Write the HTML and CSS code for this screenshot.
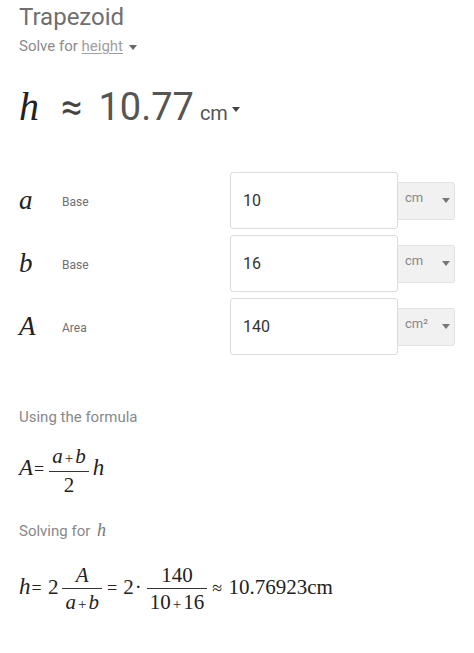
FILE: index.html
```html
<!DOCTYPE html>
<html lang="en">
<head>
    <meta charset="UTF-8" />
    <title>Trapezoid</title>
    <link rel="stylesheet" href="styles.css">
</head>
<body>
    <div class="page">
        <h1 class="title">Trapezoid</h1>
        <div class="solve-for">Solve for <span class="solve-link">height</span><span class="caret"></span></div>

        <div class="result">
            <span class="var result-var">h</span>
            <span class="approx">≈</span>
            <span class="result-value">10.77</span>
            <span class="result-unit">cm</span><span class="caret caret-dark"></span>
        </div>

        <div class="fields">
            <div class="field-row">
                <span class="var field-var">a</span>
                <span class="field-label">Base</span>
                <div class="field-input">10</div>
                <div class="unit-select"><span>cm</span><span class="caret"></span></div>
            </div>
            <div class="field-row">
                <span class="var field-var">b</span>
                <span class="field-label">Base</span>
                <div class="field-input">16</div>
                <div class="unit-select"><span>cm</span><span class="caret"></span></div>
            </div>
            <div class="field-row">
                <span class="var field-var">A</span>
                <span class="field-label">Area</span>
                <div class="field-input">140</div>
                <div class="unit-select"><span>cm²</span><span class="caret"></span></div>
            </div>
        </div>

        <p class="section-label">Using the formula</p>
        <div class="math formula"><span class="var">A</span><span class="op">=</span><span class="frac"><span class="num"><span class="var">a</span><span class="plus">+</span><span class="var">b</span></span><span class="den">2</span></span><span class="var">h</span></div>

        <p class="section-label">Solving for <span class="var small-var">h</span></p>
        <div class="math formula solution"><span class="var">h</span><span class="op">=</span> 2<span class="frac"><span class="num"><span class="var">A</span></span><span class="den"><span class="var">a</span><span class="plus">+</span><span class="var">b</span></span></span><span class="op">=</span> 2<span class="dot">·</span><span class="frac"><span class="num">140</span><span class="den">10<span class="plus">+</span>16</span></span><span class="op">≈</span> 10.76923cm</div>
    </div>
</body>
</html>
```

FILE: styles.css
```css
* {
    box-sizing: border-box;
    margin: 0;
    padding: 0;
}

body {
    font-family: Roboto, "Liberation Sans", sans-serif;
    color: #333;
    background: #fff;
}

.page {
    padding: 0 19px;
}

.title {
    font-size: 24px;
    font-weight: 400;
    color: #6f6f6f;
    line-height: 30px;
    padding-top: 2px;
}

.solve-for {
    font-size: 15px;
    color: #8a8a8a;
    line-height: 20px;
    margin-top: 4px;
}

.solve-link {
    color: #a0a0a0;
    text-decoration: underline;
    text-underline-offset: 2px;
}

.caret {
    display: inline-block;
    width: 0;
    height: 0;
    border-left: 4px solid transparent;
    border-right: 4px solid transparent;
    border-top: 5px solid #666;
    margin-left: 6px;
    vertical-align: middle;
}

.caret-dark {
    border-top-color: #444;
    margin-left: 4px;
}

.var {
    font-family: "Liberation Serif", "DejaVu Serif", serif;
    font-style: italic;
}

.result {
    display: flex;
    align-items: baseline;
    margin-top: 27px;
    height: 44px;
}

.result-var {
    font-size: 40px;
    color: #222;
}

.approx {
    font-size: 38px;
    color: #444;
    margin: 0 16px 0 22px;
}

.result-value {
    font-size: 38px;
    color: #555;
}

.result-unit {
    font-size: 20px;
    color: #555;
    margin-left: 6px;
}

.result .caret {
    align-self: center;
    margin-top: 8px;
}

.fields {
    margin-top: 45px;
    display: flex;
    flex-direction: column;
    gap: 6px;
}

.field-row {
    display: flex;
    align-items: center;
    height: 57px;
}

.field-var {
    font-size: 27px;
    color: #222;
    width: 43px;
}

.field-label {
    font-size: 12px;
    color: #6f6f6f;
    width: 168px;
    padding-top: 2px;
}

.field-input {
    width: 168px;
    height: 57px;
    border: 1px solid #dcdcdc;
    border-radius: 3px;
    font-size: 16px;
    color: #333;
    padding: 0 12px;
    display: flex;
    align-items: center;
}

.unit-select {
    width: 57px;
    height: 38px;
    background: #f1f1f1;
    border: 1px solid #e2e2e2;
    border-left: none;
    border-radius: 0 3px 3px 0;
    font-size: 13px;
    color: #888;
    display: flex;
    align-items: center;
    justify-content: space-between;
    padding: 0 4px 2px 7px;
    align-self: flex-start;
    margin-top: 10px;
}

.unit-select span:first-child {
    margin-top: -6px;
}

.unit-select .caret {
    border-top-color: #777;
    margin-top: 1px;
}

.section-label {
    font-size: 15px;
    color: #888;
    margin-top: 52px;
    line-height: 20px;
}

.small-var {
    font-size: 18px;
    color: #777;
    margin-left: 3px;
}

.math {
    font-family: "Liberation Serif", "DejaVu Serif", serif;
    font-size: 21px;
    color: #222;
    line-height: 24px;
    white-space: nowrap;
}

.formula {
    margin-top: 17px;
}

.formula + .section-label {
    margin-top: 23px;
}

.solution {
    margin-top: 22px;
}

.math > .var {
    font-size: 23px;
}

.op {
    margin: 0 1px 0 1px;
    font-size: 18px;
}

.plus {
    font-size: 15px;
    margin: 0 2px;
}

.dot {
    margin: 0 1px;
}

.frac {
    display: inline-flex;
    flex-direction: column;
    align-items: stretch;
    text-align: center;
    vertical-align: middle;
    margin: 0 4px;
    line-height: 24px;
}

.num {
    padding: 0 3px 1px;
    border-bottom: 1.5px solid #333;
}

.den {
    padding: 1px 3px 0;
}
```
